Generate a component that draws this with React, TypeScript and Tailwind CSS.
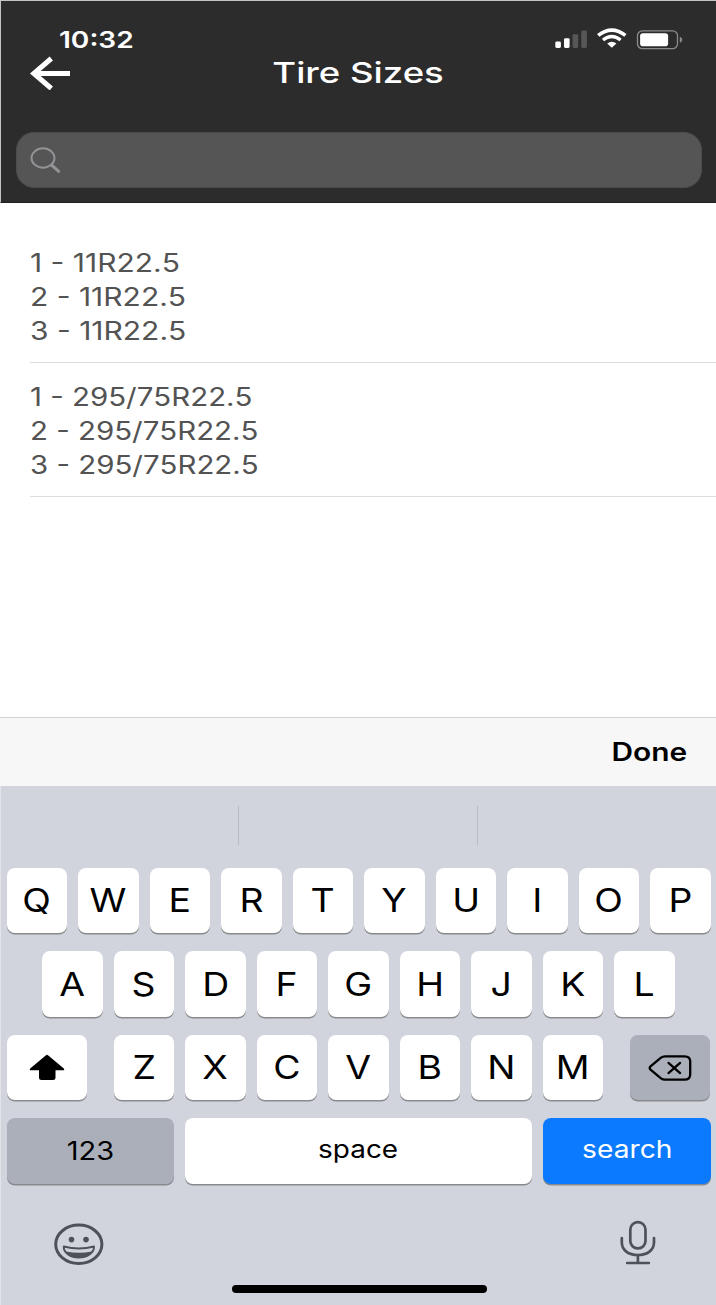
import type { ReactNode } from 'react';

const TIRES = [
  { stretch: 'scale-x-[1.185]', sizes: ['1 - 11R22.5', '2 - 11R22.5', '3 - 11R22.5'] },
  { stretch: 'scale-x-[1.163]', sizes: ['1 - 295/75R22.5', '2 - 295/75R22.5', '3 - 295/75R22.5'] },
];

function Key({ children, className = 'w-[60.5px] bg-white' }: { children: ReactNode; className?: string }) {
  return (
    <button
      className={`flex h-[65.2px] shrink-0 items-center justify-center rounded-[8px] shadow-[0_1.5px_0_#898a8d] ${className}`}
    >
      {children}
    </button>
  );
}

function Letters({ row }: { row: string }) {
  return (
    <div className="flex gap-[11px]">
      {row.split('').map((letter) => (
        <Key key={letter}>
          <span className="mt-[2px] inline-block scale-x-[1.15] text-[32.5px] leading-none">{letter}</span>
        </Key>
      ))}
    </div>
  );
}

function StatusIcons() {
  return (
    <svg width="128" height="22" viewBox="0 0 128 22" fill="none">
      <rect x="0.3" y="13.5" width="5.6" height="6.5" rx="1.4" fill="#fff" />
      <rect x="9" y="10.2" width="5.6" height="9.8" rx="1.4" fill="#fff" />
      <rect x="17.6" y="6.2" width="5.6" height="13.8" rx="1.4" fill="#575757" />
      <rect x="26.3" y="2.4" width="5.6" height="17.6" rx="1.4" fill="#575757" />
      <path d="M43.2 7.4Q56.8-3.2 70.4 7.4" stroke="#fff" strokeWidth="3.6" />
      <path d="M48 12Q56.8 5 65.6 12" stroke="#fff" strokeWidth="3.4" />
      <path d="M52.2 15.6Q56.8 11.9 61.4 15.6L56.8 19.8Z" fill="#fff" />
      <rect x="82.5" y="2.8" width="40" height="17.8" rx="4.8" stroke="#8b8b8b" strokeWidth="1.3" />
      <rect x="85.1" y="5.2" width="28" height="13" rx="2.8" fill="#fff" />
      <path d="M124.8 8.7C128 9.5 128 13.9 124.8 14.7Z" fill="#8b8b8b" />
    </svg>
  );
}

export default function App() {
  return (
    <div className="flex h-[1305px] w-[716px] flex-col overflow-hidden bg-white font-['Inter','Liberation_Sans',sans-serif]">
      <header className="h-[203px] shrink-0 border-t border-l border-[#c3c5c4] border-b border-b-[#202020] bg-[#2c2c2c] text-white">
        <div className="flex h-[50px] items-start justify-between pt-[26.5px] pr-[33px] pl-[58px]">
          <span className="inline-block origin-left scale-x-[1.2] text-[23.4px] leading-6 font-semibold">10:32</span>
          <StatusIcons />
        </div>
        <div className="grid h-[43px] grid-cols-[1fr_auto_1fr] items-center">
          <svg className="ml-[28px]" width="42" height="34" viewBox="0 0 42 34" fill="none" stroke="#fff">
            <path d="M22.3 2.5 4.8 17.5 22.3 32.5" strokeWidth="5" />
            <path d="M4 17.5h37" strokeWidth="5" />
          </svg>
          <h1 className="inline-block scale-x-[1.26] text-[29px] leading-[42px] font-medium">Tire Sizes</h1>
        </div>
        <div className="mx-[15px] mt-[38px] flex h-[56px] w-[686px] items-center rounded-[18px] border border-[#4c4c4c] bg-[#555]">
          <svg className="ml-[12.5px]" width="32" height="28" viewBox="0 0 32 28" fill="none" stroke="#929297">
            <ellipse cx="13" cy="12" rx="11.5" ry="9.7" strokeWidth="2" />
            <path d="m21.5 19 7.2 6.3" strokeWidth="3" strokeLinecap="round" />
          </svg>
        </div>
      </header>

      <main className="h-[514px] shrink-0 pt-[25.5px] pl-[30px]">
        {TIRES.map(({ stretch, sizes }) => (
          <ul key={sizes[0]} className="h-[134.3px] border-b border-[#dedede] pt-[17px] text-[#535353]">
            {sizes.map((size) => (
              <li key={size} className="h-[34px] whitespace-nowrap">
                <span
                  className={`inline-block origin-left text-[25.3px] leading-[34px] [font-kerning:none] ${stretch}`}
                >
                  {size}
                </span>
              </li>
            ))}
          </ul>
        ))}
      </main>

      <div className="flex h-[69px] shrink-0 items-center justify-end border-t border-[#d2d2d2] bg-[#f7f7f7] pr-[29px]">
        <button className="origin-right scale-x-[1.18] text-[25.3px] font-semibold text-black">Done</button>
      </div>

      <section className="flex h-[519px] shrink-0 flex-col border-l border-[#e2e4e8] bg-[#d1d4dc] text-black">
        <div className="flex h-[82px] pt-5">
          <div className="h-[39px] w-[238px] border-r-[1.5px] border-[#b9bcc3]" />
          <div className="h-[39px] w-[238.5px] border-r-[1.5px] border-[#b9bcc3]" />
        </div>
        <div className="flex flex-col gap-[18.3px] pl-[5.6px]">
          <Letters row="QWERTYUIOP" />
          <div className="pl-[35.5px]">
            <Letters row="ASDFGHJKL" />
          </div>
          <div className="flex gap-[26.4px]">
            <Key className="w-[80.7px] bg-white">
              <svg width="36" height="27" viewBox="0 0 36 27">
                <path d="M17 1.2Q18 .3 19 1.2L34.8 14.5Q36 16.3 34 16.3H26.5V23.5Q26.5 26 24 26H12.5Q10 26 10 23.5V16.3H2Q0 16.3 1.2 14.5Z" />
              </svg>
            </Key>
            <Letters row="ZXCVBNM" />
            <Key className="w-[80.7px] bg-[#abafba]">
              <svg width="44" height="28" viewBox="0 0 44 28" fill="none" stroke="#000" strokeWidth="2.3" strokeLinecap="round" strokeLinejoin="round">
                <path d="M17 2.3H36.5Q42.2 2.3 42.2 7.3V20.5Q42.2 25.7 36.5 25.7H17Q14.8 25.7 13 24.4L2.5 15.6Q1 14 2.5 12.4L13 3.6Q14.8 2.3 17 2.3Z" />
                <path d="m20.5 8.9 11.6 10.2m0-10.2L20.5 19.1" />
              </svg>
            </Key>
          </div>
          <div className="flex gap-[11px]">
            <Key className="w-[167.5px] bg-[#abafba]">
              <span className="mt-px inline-block scale-x-[1.16] text-[25px] [font-kerning:none]">123</span>
            </Key>
            <Key className="w-[347px] bg-white pb-[3px]">
              <span className="inline-block scale-x-[1.14] text-[24.5px]">space</span>
            </Key>
            <Key className="w-[167.5px] bg-[#0b7aff] pb-[3px] text-white">
              <span className="inline-block scale-x-[1.15] text-[24.5px]">search</span>
            </Key>
          </div>
        </div>
        <div className="flex justify-between pt-[36px] pr-[59px] pl-[52px]">
          <svg className="mt-[2px]" width="52" height="44" viewBox="0 0 52 44" fill="none" stroke="#4d525a">
            <ellipse cx="25.8" cy="22.3" rx="23.1" ry="19.2" strokeWidth="3" />
            <ellipse cx="18.5" cy="17.6" rx="2.8" ry="2.8" fill="#4d525a" stroke="none" />
            <ellipse cx="33" cy="17.6" rx="2.8" ry="2.8" fill="#4d525a" stroke="none" />
            <path d="M10.8 24.5Q25.8 28.5 41 24.5C41.2 31 34 35.5 25.8 35.5S10.4 31 10.8 24.5Z" strokeWidth="2" strokeLinejoin="round" />
            <path d="M13 29.5Q25.8 32 38.8 29.5C37 34 31 35.5 25.8 35.5S14.5 34 13 29.5Z" fill="#4d525a" stroke="none" />
          </svg>
          <svg width="38" height="46" viewBox="0 0 38 46" fill="none" stroke="#4d525a" strokeWidth="2.7" strokeLinecap="round">
            <rect x="11.3" y="2.2" width="15.2" height="26.2" rx="7.4" />
            <path d="M2.8 18v4.5C2.8 30 9.5 35 18.9 35S35 30 35 22.5V18M18.9 35v8M8.2 43h21.6" />
          </svg>
        </div>
        <div className="mt-auto mb-3 ml-[230.5px] h-2 w-[255px] rounded-full bg-black" />
      </section>
    </div>
  );
}
